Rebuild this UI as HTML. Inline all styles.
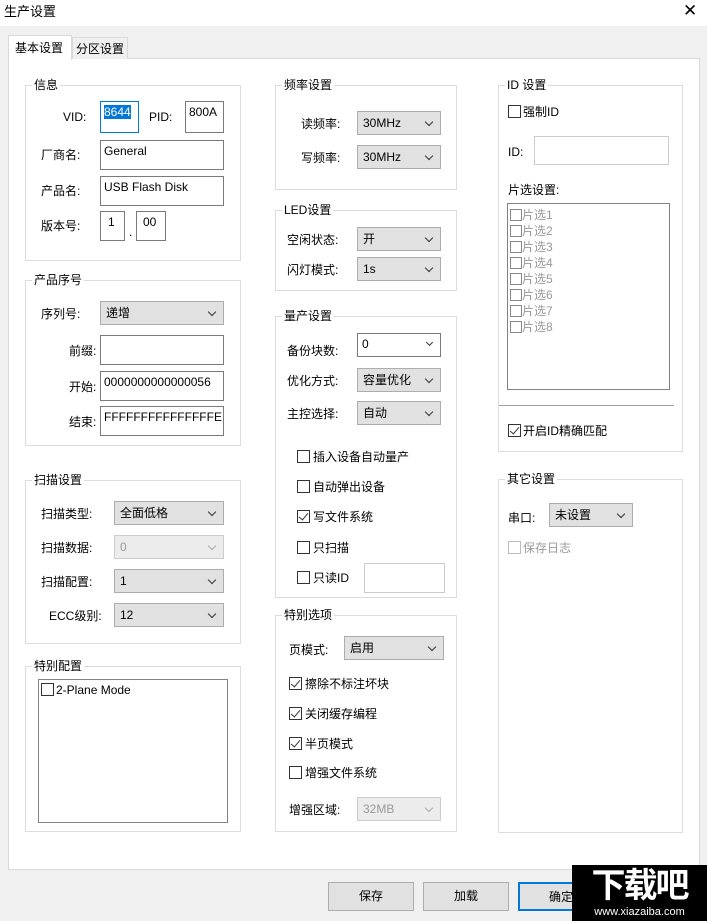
<html><head><style>
body{margin:0;width:707px;height:921px;background:#f0f0f0;position:relative;overflow:hidden;font:12px "Liberation Sans","Noto Sans CJK SC",sans-serif;color:#000}
div,span{position:absolute;box-sizing:border-box}
.g{border:1px solid #dcdcdc}
.gl{background:#fff;padding:0 2px;top:-9px;left:6px;line-height:16px}
.t{line-height:16px;white-space:nowrap}
.e{background:#fff;border:1px solid #7a7a7a;padding:2px 3px;line-height:16px}
.c{background:#e1e1e1;border:1px solid #adadad;padding:0 5px;line-height:22px;height:24px}
.c:after{content:"";position:absolute;right:8px;top:7px;width:5px;height:5px;border-right:1.3px solid #333;border-bottom:1.3px solid #333;transform:rotate(45deg)}
.d{color:#999;background:#ececec;border-color:#ccc}
.d:after{border-color:#aaa}
.k{width:13px;height:13px;border:1px solid #333;background:#fff}
.ck:after{content:"";position:absolute;left:3px;top:0px;width:4px;height:8px;border-right:1.3px solid #333;border-bottom:1.3px solid #333;transform:rotate(40deg)}
.b{background:#e1e1e1;border:1px solid #adadad;width:86px;height:29px;line-height:27px;text-align:center}
</style></head><body>
<div style="left:0;top:0;width:707px;height:26px;background:#fff"></div>
<div class="t" style="left:4px;top:4px;font-size:13px">生产设置</div>
<div class="t" style="left:683px;top:3px;font-size:17px">✕</div>
<div style="left:8px;top:58px;width:692px;height:812px;background:#fff;border:1px solid #d9d9d9"></div>
<div style="left:8px;top:35px;width:64px;height:25px;background:#fff;border:1px solid #d9d9d9;border-bottom:none"></div>
<div class="t" style="left:15px;top:40px">基本设置</div>
<div style="left:72px;top:37px;width:56px;height:22px;background:#f0f0f0;border:1px solid #d9d9d9;border-bottom:none"></div>
<div class="t" style="left:76px;top:41px">分区设置</div>

<div class="g" style="left:25px;top:85px;width:216px;height:176px"><span class="gl">信息</span></div>
<div class="t" style="left:63px;top:109px">VID:</div>
<div class="e" style="left:100px;top:101px;width:39px;height:32px;border-color:#0078d7;padding:2px 3px"><span style="position:static;background:#0078d7;color:#fff">8644</span></div>
<div class="t" style="left:149px;top:109px">PID:</div>
<div class="e" style="left:185px;top:101px;width:39px;height:32px">800A</div>
<div class="t" style="left:41px;top:147px">厂商名:</div>
<div class="e" style="left:100px;top:140px;width:124px;height:30px">General</div>
<div class="t" style="left:41px;top:183px">产品名:</div>
<div class="e" style="left:100px;top:176px;width:124px;height:30px">USB Flash Disk</div>
<div class="t" style="left:41px;top:218px">版本号:</div>
<div class="e" style="left:100px;top:211px;width:25px;height:30px;padding-left:7px">1</div>
<div class="t" style="left:129px;top:224px">.</div>
<div class="e" style="left:136px;top:211px;width:30px;height:30px;padding-left:6px">00</div>

<div class="g" style="left:25px;top:280px;width:216px;height:166px"><span class="gl">产品序号</span></div>
<div class="t" style="left:41px;top:306px">序列号:</div>
<div class="c" style="left:100px;top:301px;width:124px">递增</div>
<div class="t" style="left:69px;top:343px">前缀:</div>
<div class="e" style="left:100px;top:335px;width:124px;height:30px"></div>
<div class="t" style="left:69px;top:379px">开始:</div>
<div class="e" style="left:100px;top:371px;width:124px;height:30px">0000000000000056</div>
<div class="t" style="left:69px;top:414px">结束:</div>
<div class="e" style="left:100px;top:406px;width:124px;height:30px">FFFFFFFFFFFFFFFE</div>

<div class="g" style="left:25px;top:480px;width:216px;height:164px"><span class="gl">扫描设置</span></div>
<div class="t" style="left:41px;top:506px">扫描类型:</div>
<div class="c" style="left:114px;top:501px;width:110px">全面低格</div>
<div class="t" style="left:41px;top:540px">扫描数据:</div>
<div class="c d" style="left:114px;top:535px;width:110px">0</div>
<div class="t" style="left:41px;top:574px">扫描配置:</div>
<div class="c" style="left:114px;top:569px;width:110px">1</div>
<div class="t" style="left:49px;top:608px">ECC级别:</div>
<div class="c" style="left:114px;top:603px;width:110px">12</div>

<div class="g" style="left:25px;top:666px;width:216px;height:166px"><span class="gl">特别配置</span></div>
<div style="left:38px;top:679px;width:190px;height:144px;border:1px solid #828282;background:#fff"></div>
<div class="k" style="left:41px;top:683px"></div>
<div class="t" style="left:56px;top:682px">2-Plane Mode</div>

<div class="g" style="left:275px;top:85px;width:182px;height:105px"><span class="gl">频率设置</span></div>
<div class="t" style="left:301px;top:116px">读频率:</div>
<div class="c" style="left:357px;top:111px;width:84px">30MHz</div>
<div class="t" style="left:301px;top:150px">写频率:</div>
<div class="c" style="left:357px;top:145px;width:84px">30MHz</div>

<div class="g" style="left:275px;top:210px;width:182px;height:81px"><span class="gl">LED设置</span></div>
<div class="t" style="left:287px;top:232px">空闲状态:</div>
<div class="c" style="left:357px;top:227px;width:84px">开</div>
<div class="t" style="left:287px;top:262px">闪灯模式:</div>
<div class="c" style="left:357px;top:257px;width:84px">1s</div>

<div class="g" style="left:275px;top:316px;width:182px;height:282px"><span class="gl">量产设置</span></div>
<div class="t" style="left:287px;top:343px">备份块数:</div>
<div class="e" style="left:357px;top:333px;width:84px;height:24px;padding:2px 4px">0<span style="right:8px;top:6px;width:5px;height:5px;border-right:1.3px solid #333;border-bottom:1.3px solid #333;transform:rotate(45deg)"></span></div>
<div class="t" style="left:287px;top:373px">优化方式:</div>
<div class="c" style="left:357px;top:368px;width:84px">容量优化</div>
<div class="t" style="left:287px;top:406px">主控选择:</div>
<div class="c" style="left:357px;top:401px;width:84px">自动</div>
<div class="k" style="left:297px;top:450px"></div><div class="t" style="left:313px;top:449px">插入设备自动量产</div>
<div class="k" style="left:297px;top:480px"></div><div class="t" style="left:313px;top:479px">自动弹出设备</div>
<div class="k ck" style="left:297px;top:510px"></div><div class="t" style="left:313px;top:509px">写文件系统</div>
<div class="k" style="left:297px;top:541px"></div><div class="t" style="left:313px;top:540px">只扫描</div>
<div class="k" style="left:297px;top:571px"></div><div class="t" style="left:313px;top:570px">只读ID</div>
<div style="left:364px;top:563px;width:81px;height:30px;border:1px solid #ccc"></div>

<div class="g" style="left:275px;top:615px;width:182px;height:217px"><span class="gl">特别选项</span></div>
<div class="t" style="left:289px;top:642px">页模式:</div>
<div class="c" style="left:344px;top:636px;width:100px">启用</div>
<div class="k ck" style="left:289px;top:677px"></div><div class="t" style="left:305px;top:676px">擦除不标注坏块</div>
<div class="k ck" style="left:289px;top:707px"></div><div class="t" style="left:305px;top:706px">关闭缓存编程</div>
<div class="k ck" style="left:289px;top:737px"></div><div class="t" style="left:305px;top:736px">半页模式</div>
<div class="k" style="left:289px;top:766px"></div><div class="t" style="left:305px;top:765px">增强文件系统</div>
<div class="t" style="left:289px;top:802px">增强区域:</div>
<div class="c d" style="left:357px;top:797px;width:84px">32MB</div>

<div class="g" style="left:498px;top:85px;width:185px;height:367px"><span class="gl">ID 设置</span></div>
<div class="k" style="left:508px;top:105px"></div><div class="t" style="left:523px;top:104px">强制ID</div>
<div class="t" style="left:508px;top:144px">ID:</div>
<div style="left:534px;top:136px;width:135px;height:29px;border:1px solid #ccc"></div>
<div class="t" style="left:508px;top:182px">片选设置:</div>
<div style="left:507px;top:203px;width:163px;height:187px;border:1px solid #828282;background:#fff"></div>
<div style="left:510px;top:207px;color:#999;line-height:16px">
<div style="position:static"><span class="k" style="position:relative;display:inline-block;border-color:#888;vertical-align:-2px;width:12px;height:12px"></span>片选1</div>
<div style="position:static"><span class="k" style="position:relative;display:inline-block;border-color:#888;vertical-align:-2px;width:12px;height:12px"></span>片选2</div>
<div style="position:static"><span class="k" style="position:relative;display:inline-block;border-color:#888;vertical-align:-2px;width:12px;height:12px"></span>片选3</div>
<div style="position:static"><span class="k" style="position:relative;display:inline-block;border-color:#888;vertical-align:-2px;width:12px;height:12px"></span>片选4</div>
<div style="position:static"><span class="k" style="position:relative;display:inline-block;border-color:#888;vertical-align:-2px;width:12px;height:12px"></span>片选5</div>
<div style="position:static"><span class="k" style="position:relative;display:inline-block;border-color:#888;vertical-align:-2px;width:12px;height:12px"></span>片选6</div>
<div style="position:static"><span class="k" style="position:relative;display:inline-block;border-color:#888;vertical-align:-2px;width:12px;height:12px"></span>片选7</div>
<div style="position:static"><span class="k" style="position:relative;display:inline-block;border-color:#888;vertical-align:-2px;width:12px;height:12px"></span>片选8</div>
</div>
<div style="left:499px;top:405px;width:175px;height:1px;background:#a0a0a0"></div>
<div class="k ck" style="left:508px;top:424px"></div><div class="t" style="left:523px;top:423px">开启ID精确匹配</div>

<div class="g" style="left:498px;top:479px;width:185px;height:354px"><span class="gl">其它设置</span></div>
<div class="t" style="left:508px;top:510px">串口:</div>
<div class="c" style="left:549px;top:503px;width:84px">未设置</div>
<div class="k" style="left:508px;top:541px;border-color:#bbb"></div><div class="t" style="left:523px;top:540px;color:#999">保存日志</div>

<div class="b" style="left:328px;top:882px">保存</div>
<div class="b" style="left:423px;top:882px">加载</div>
<div class="b" style="left:518px;top:882px;border:2px solid #0078d7">确定</div>
<div style="left:572px;top:865px;width:135px;height:56px;background:#000;color:#fff;text-align:center">
<span class="t" style="left:0;width:135px;top:2px;font-size:34px;font-weight:bold;line-height:38px;letter-spacing:-2px">下载吧</span>
<span class="t" style="left:0;width:135px;top:40px;font-size:11px;line-height:14px">www.xiazaiba.com</span></div>
</body></html>
